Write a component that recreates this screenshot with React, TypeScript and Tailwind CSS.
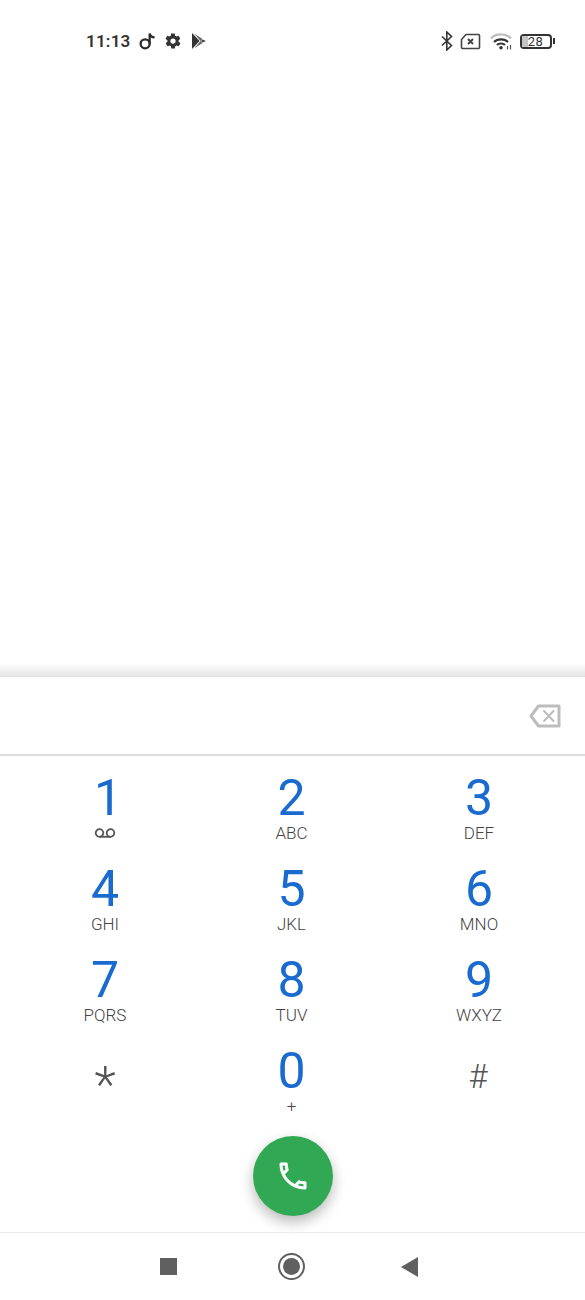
const KEYS = [
  { digit: "1", sub: "voicemail" },
  { digit: "2", sub: "ABC" },
  { digit: "3", sub: "DEF" },
  { digit: "4", sub: "GHI" },
  { digit: "5", sub: "JKL" },
  { digit: "6", sub: "MNO" },
  { digit: "7", sub: "PQRS" },
  { digit: "8", sub: "TUV" },
  { digit: "9", sub: "WXYZ" },
];

function Voicemail() {
  return (
    <svg width="22" height="10" viewBox="0 0 22 10" fill="none" stroke="#555" strokeWidth="1.8">
      <circle cx="5.5" cy="5" r="3.8" />
      <circle cx="16.5" cy="5" r="3.8" />
      <path d="M5.5 8.8h11" />
    </svg>
  );
}

function StatusLeft() {
  return (
    <div className="flex items-center">
      <span className="text-[17px] font-semibold text-[#333] tracking-[0.2px] leading-none">11:13</span>
      <svg className="ml-[9px]" width="17" height="20" viewBox="0 0 18 20" fill="none" stroke="#2b2b2b" strokeWidth="2.4">
        <circle cx="6.5" cy="13" r="4.8" />
        <path d="M11.3 13V2c.6 2.8 2.600 4 5.200 4.200" />
      </svg>
      <svg className="ml-[8px]" width="18" height="18" viewBox="0 0 24 24" fill="#333">
        <path d="M19.4 13c.1-.3.1-.7.1-1s0-.7-.1-1l2.100-1.600c.2-.2.2-.4.1-.6l-2-3.500c-.1-.2-.4-.3-.6-.2l-2.500 1c-.5-.4-1.100-.7-1.700-1l-.4-2.600c0-.3-.2-.5-.5-.5h-4c-.3 0-.5.2-.5.4l-.4 2.700c-.6.2-1.100.6-1.700 1l-2.500-1c-.2-.1-.5 0-.6.2l-2 3.500c-.1.2-.1.4.1.6L4.600 11c-.1.3-.1.7-.1 1s0 .7.1 1l-2.100 1.600c-.2.2-.2.400-.1.600l2 3.500c.1.200.4.300.6.200l2.500-1c.5.400 1.100.700 1.700 1l.4 2.600c0 .3.200.500.500.500h4c.3 0 .5-.2.5-.4l.4-2.700c.6-.2 1.100-.6 1.700-1l2.500 1c.2.100.5 0 .6-.2l2-3.500c.1-.2.1-.4-.1-.6L19.400 13zM12 15.500a3.500 3.500 0 1 1 0-7 3.500 3.500 0 0 1 0 7z" />
      </svg>
      <svg className="ml-[9px]" width="16" height="18" viewBox="0 0 16 18">
        <path d="M1 1l7.500 8L1 17z" fill="#333" />
        <path d="M3 1.500L11.500 7 9.500 9z" fill="#666" />
        <path d="M3 16.500L11.500 11 9.500 9z" fill="#666" />
        <path d="M11.500 7.500L15 9l-3.500 1.500L10 9z" fill="#444" />
      </svg>
    </div>
  );
}

function StatusRight() {
  return (
    <div className="flex items-center">
      <svg width="14" height="20" viewBox="0 0 14 20" fill="none" stroke="#333" strokeWidth="1.600">
        <path d="M2 5.500l9.500 9L6.800 19V1l4.700 4.500-9.500 9" />
      </svg>
      <svg className="ml-[6px]" width="21" height="17" viewBox="0 0 21 17" fill="none" stroke="#444" strokeWidth="1.600">
        <path d="M6 1.500h12.500a1 1 0 0 1 1 1v12a1 1 0 0 1-1 1h-16a1 1 0 0 1-1-1V6.500z" />
        <path d="M8 6l5 5M13 6l-5 5" strokeWidth="2" />
      </svg>
      <svg className="ml-[9px]" width="23" height="18" viewBox="0 0 23 18" fill="none">
        <path d="M1 6.500C6 1 16 1 21 6.500" stroke="#bdbdbd" strokeWidth="2.200" />
        <path d="M4 10c3.500-3.600 10.500-3.600 14 0" stroke="#333" strokeWidth="2.200" />
        <path d="M7 13c2-2 6-2 8 0" stroke="#333" strokeWidth="2.200" />
        <circle cx="11" cy="15.800" r="1.800" fill="#333" />
        <path d="M17.500 14v3.500M20.500 13v4.500" stroke="#555" strokeWidth="1.200" />
      </svg>
      <div className="relative ml-[7px] flex h-[15px] w-[32px] items-center justify-center rounded-[4px] border-2 border-[#333]">
        <div className="absolute left-0 top-0 h-full w-[6px] bg-[#c4c4c4]" />
        <span className="relative text-[13px] leading-none tracking-[0.5px] text-[#333]">28</span>
      </div>
      <div className="ml-[1.500px] h-[6px] w-[2px] bg-[#333]" />
    </div>
  );
}

function Key({ digit, sub }: { digit: string; sub: string }) {
  return (
    <div className="flex h-[91px] flex-col items-center">
      <span className={`h-[55px] text-[50px] leading-[56px] text-[#1a6bd0] ${digit === "1" ? "pl-[6px]" : ""}`}>{digit}</span>
      <span className="flex h-[16px] items-center text-[17px] font-light leading-[16px] text-[#444]">
        {sub === "voicemail" ? <Voicemail /> : sub}
      </span>
    </div>
  );
}

export default function App() {
  return (
    <div className="flex h-[1300px] w-[585px] flex-col bg-white font-['Roboto',sans-serif]">
      <div className="flex h-[663px] flex-col">
        <div className="flex items-center justify-between pl-[86px] pr-[30px] pt-[31px]">
          <StatusLeft />
          <StatusRight />
        </div>
      </div>
      <div className="h-[13px] bg-gradient-to-b from-white to-[#e6e6e6]" />
      <div className="flex h-[80px] items-center justify-end border-b-2 border-t border-b-[#dcdcdc] border-t-[#e2e2e2] pr-[24px]">
        <svg width="32" height="24" viewBox="0 0 32 24" fill="none" stroke="#bdbdbd" strokeWidth="3">
          <path d="M9.500 2H30v20H9.500L2 12z" strokeLinejoin="round" />
          <path d="M14.500 6.500l10.500 11M25 6.500L14.500 17.500" strokeWidth="2" />
        </svg>
      </div>
      <div className="grid grid-cols-[210px_163px_212px] pt-[14px]">
        {KEYS.map((key) => (
          <Key key={key.digit} digit={key.digit} sub={key.sub} />
        ))}
        <div className="flex h-[91px] items-start justify-center">
          <span className="pt-[14px] text-[50px] font-light leading-[56px] text-[#555]">*</span>
        </div>
        <div className="flex h-[91px] flex-col items-center">
          <span className="h-[55px] text-[50px] leading-[56px] text-[#1a6bd0]">0</span>
          <span className="text-[17px] font-light leading-[16px] text-[#444]">+</span>
        </div>
        <div className="flex h-[91px] items-start justify-center">
          <span className="pr-[2px] pt-[6px] text-[33px] font-light leading-[56px] text-[#555]">#</span>
        </div>
      </div>
      <div className="mt-[2px] flex justify-center">
        <div className="flex h-[80px] w-[80px] items-center justify-center rounded-full bg-[#31a853] shadow-[0_6px_14px_rgba(0,0,0,0.28)]">
          <svg width="36" height="36" viewBox="0 0 24 24" fill="white">
            <path d="M6.540 5c.060.890.210 1.760.450 2.590l-1.200 1.200c-.410-1.200-.670-2.470-.760-3.790h1.510m9.860 12.020c.850.240 1.720.390 2.600.450v1.490c-1.320-.090-2.590-.350-3.800-.750l1.200-1.190M7.500 3H4c-.550 0-1 .450-1 1 0 9.390 7.610 17 17 17 .550 0 1-.450 1-1v-3.490c0-.550-.450-1-1-1-1.240 0-2.450-.200-3.570-.570-.100-.040-.210-.050-.310-.050-.260 0-.510.100-.710.290l-2.200 2.200c-2.830-1.450-5.150-3.760-6.590-6.590l2.200-2.200c.280-.280.360-.670.250-1.020C8.700 6.450 8.500 5.250 8.500 4c0-.550-.450-1-1-1z" />
          </svg>
        </div>
      </div>
      <div className="mt-[16px] flex flex-1 items-center border-t border-[#ececec] pl-[160px]">
        <div className="h-[17px] w-[17px] bg-[#606060]" />
        <div className="ml-[101px] flex h-[27px] w-[27px] items-center justify-center rounded-full border-[2.500px] border-[#606060]">
          <div className="h-[17px] w-[17px] rounded-full bg-[#606060]" />
        </div>
        <svg className="ml-[96px]" width="17" height="20" viewBox="0 0 17 20">
          <path d="M17 0v20L0 10z" fill="#606060" />
        </svg>
      </div>
    </div>
  );
}
